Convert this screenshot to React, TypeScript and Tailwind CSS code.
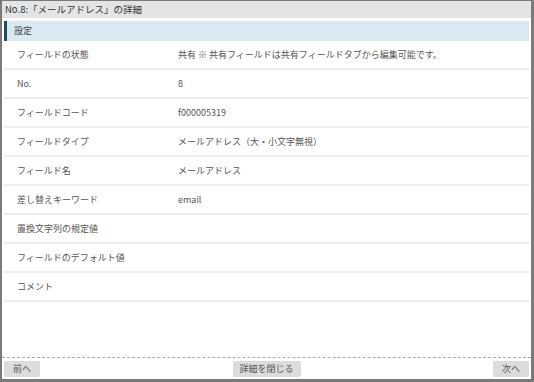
const rows = [
  { label: "フィールドの状態", value: "共有 ※ 共有フィールドは共有フィールドタブから編集可能です。" },
  { label: "No.", value: "8" },
  { label: "フィールドコード", value: "f000005319" },
  { label: "フィールドタイプ", value: "メールアドレス（大・小文字無視）" },
  { label: "フィールド名", value: "メールアドレス" },
  { label: "差し替えキーワード", value: "email" },
  { label: "置換文字列の規定値", value: "" },
  { label: "フィールドのデフォルト値", value: "" },
  { label: "コメント", value: "" },
];

export default function App() {
  return (
    <div
      className="flex h-[382px] w-[534px] flex-col border-l-2 border-r-[3px] border-t border-b-[3px] border-[#7a7a7a] bg-white text-[9px] text-[#555]"
      style={{ fontFamily: '"Noto Sans CJK JP", "Noto Sans", sans-serif' }}
    >
      {/* Title */}
      <div className="flex h-[17px] items-center bg-[#e4e4e4] px-[3px] text-[9.5px] text-[#333]">
        No.8:「メールアドレス」の詳細
      </div>

      {/* Body */}
      <div className="flex-1 px-[2px] pt-[3px]">
        <div className="flex h-[20px] items-center border-l-[3px] border-[#1d4d68] bg-[#d8e9f1] pl-[7px] text-[#444]">
          設定
        </div>
        {rows.map((row) => (
          <div
            key={row.label}
            className="flex h-[29px] items-center border-b-2 border-[#eeeeee]"
          >
            <div className="w-[174px] pl-[13px]">{row.label}</div>
            <div>{row.value}</div>
          </div>
        ))}
      </div>

      {/* Footer */}
      <div className="flex h-[22px] items-center justify-between border-t border-dashed border-[#aaa] px-[2px]">
        <button className="h-[16px] w-[36px] rounded-[2px] bg-[#dcdcdc] text-[9px] text-[#555]">前へ</button>
        <button className="h-[16px] w-[68px] rounded-[2px] bg-[#dcdcdc] text-[9px] text-[#555]">詳細を閉じる</button>
        <button className="h-[16px] w-[36px] rounded-[2px] bg-[#dcdcdc] text-[9px] text-[#555]">次へ</button>
      </div>
    </div>
  );
}
